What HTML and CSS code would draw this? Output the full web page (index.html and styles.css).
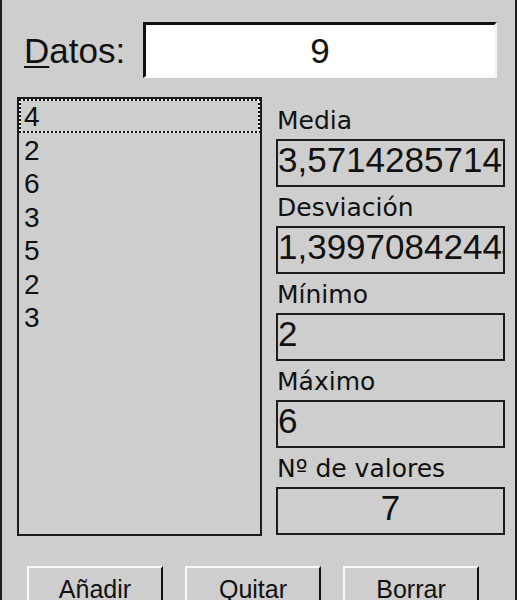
FILE: index.html
```html
<!DOCTYPE html>
<html lang="es">
<head>
    <meta charset="UTF-8">
    <meta name="viewport" content="width=device-width, initial-scale=1.0">
    <title>Estadística</title>
    <link rel="stylesheet" href="styles.css">
</head>
<body>
    <div class="dialog">
        <!-- Entrada de datos -->
        <div class="top-row">
            <label class="datos-label" for="datos"><span class="accel">D</span>atos:</label>
            <input type="text" id="datos" class="datos-input" value="9">
        </div>

        <div class="main-row">
            <ul class="listbox">
                <li class="focused">4</li>
                <li>2</li>
                <li>6</li>
                <li>3</li>
                <li>5</li>
                <li>2</li>
                <li>3</li>
            </ul>

            <div class="stats">
                <div class="stat-label">Media</div>
                <div class="stat-box">3,5714285714285714</div>
                <div class="stat-label">Desviación</div>
                <div class="stat-box">1,3997084244475303</div>
                <div class="stat-label">Mínimo</div>
                <div class="stat-box">2</div>
                <div class="stat-label">Máximo</div>
                <div class="stat-box">6</div>
                <div class="stat-label">Nº de valores</div>
                <div class="stat-box center">7</div>
            </div>
        </div>

        <div class="button-row">
            <button type="button" class="win-button">Añadir</button>
            <button type="button" class="win-button">Quitar</button>
            <button type="button" class="win-button">Borrar</button>
        </div>
    </div>
</body>
</html>
```

FILE: styles.css
```css
html, body {
    margin: 0;
    padding: 0;
    overflow: hidden;
}
body {
    background-color: #cecece;
    color: #111;
}
.dialog {
    width: 517px;
    height: 600px;
    box-sizing: border-box;
    border-left: 2px solid #1e1e1e;
    border-right: 2px solid #1e1e1e;
    background-color: #cecece;
    overflow: hidden;
}
.top-row {
    display: flex;
    align-items: center;
    height: 56px;
    margin-top: 22px;
    padding-left: 22px;
}
.datos-label {
    width: 119px;
    padding-top: 2px;
    font-family: "Liberation Sans", Arial, sans-serif;
    font-size: 35px;
}
.accel {
    text-decoration: underline;
    text-decoration-thickness: 2px;
    text-underline-offset: 3px;
}
.datos-input {
    width: 354px;
    height: 56px;
    box-sizing: border-box;
    margin: 0;
    padding: 0;
    border-style: solid;
    border-width: 3px 3px 2px 3px;
    border-color: #111 #f6f6f6 #f6f6f6 #111;
    background-color: #fff;
    font-family: "Liberation Sans", Arial, sans-serif;
    font-size: 35px;
    color: #111;
    text-align: center;
    outline: none;
}
.main-row {
    display: flex;
    gap: 14px;
    margin-top: 19px;
    padding-left: 15px;
}
.listbox {
    width: 245px;
    height: 439px;
    box-sizing: border-box;
    margin: 0;
    padding: 0;
    list-style: none;
    border: 2px solid #1c1c1c;
    font-family: "Liberation Sans", Arial, sans-serif;
    font-size: 28px;
}
.listbox li {
    height: 33.5px;
    box-sizing: border-box;
    padding: 2px 0 0 5px;
    line-height: 31px;
}
.listbox li.focused {
    background:
        repeating-linear-gradient(90deg, #111 0 2px, #ececec 2px 4px) top / 100% 2px no-repeat,
        repeating-linear-gradient(90deg, #111 0 2px, #ececec 2px 4px) bottom / 100% 2px no-repeat,
        repeating-linear-gradient(0deg, #111 0 2px, #ececec 2px 4px) left / 2px 100% no-repeat,
        repeating-linear-gradient(0deg, #111 0 2px, #ececec 2px 4px) right / 2px 100% no-repeat;
}
.stats {
    width: 229px;
    padding-top: 3px;
}
.stat-label {
    height: 39px;
    box-sizing: border-box;
    padding: 6px 0 0 1px;
    line-height: 29px;
    font-family: "DejaVu Sans", Verdana, sans-serif;
    font-size: 25px;
    white-space: nowrap;
}
.stat-box {
    height: 48px;
    box-sizing: border-box;
    border: 2px solid #1c1c1c;
    overflow: hidden;
    white-space: nowrap;
    line-height: 38px;
    font-family: "Liberation Sans", Arial, sans-serif;
    font-size: 35px;
}
.stat-box.center {
    text-align: center;
}
.button-row {
    display: flex;
    gap: 22px;
    margin-top: 30px;
    padding-left: 25px;
}
.win-button {
    width: 136px;
    height: 64px;
    box-sizing: border-box;
    margin: 0;
    padding: 7px 0 25px 0;
    border-style: solid;
    border-width: 2px;
    border-color: #f8f8f8 #111 #111 #f8f8f8;
    background-color: #cecece;
    color: #111;
    font-family: "Liberation Sans", Arial, sans-serif;
    font-size: 25px;
    line-height: 28px;
}
```
